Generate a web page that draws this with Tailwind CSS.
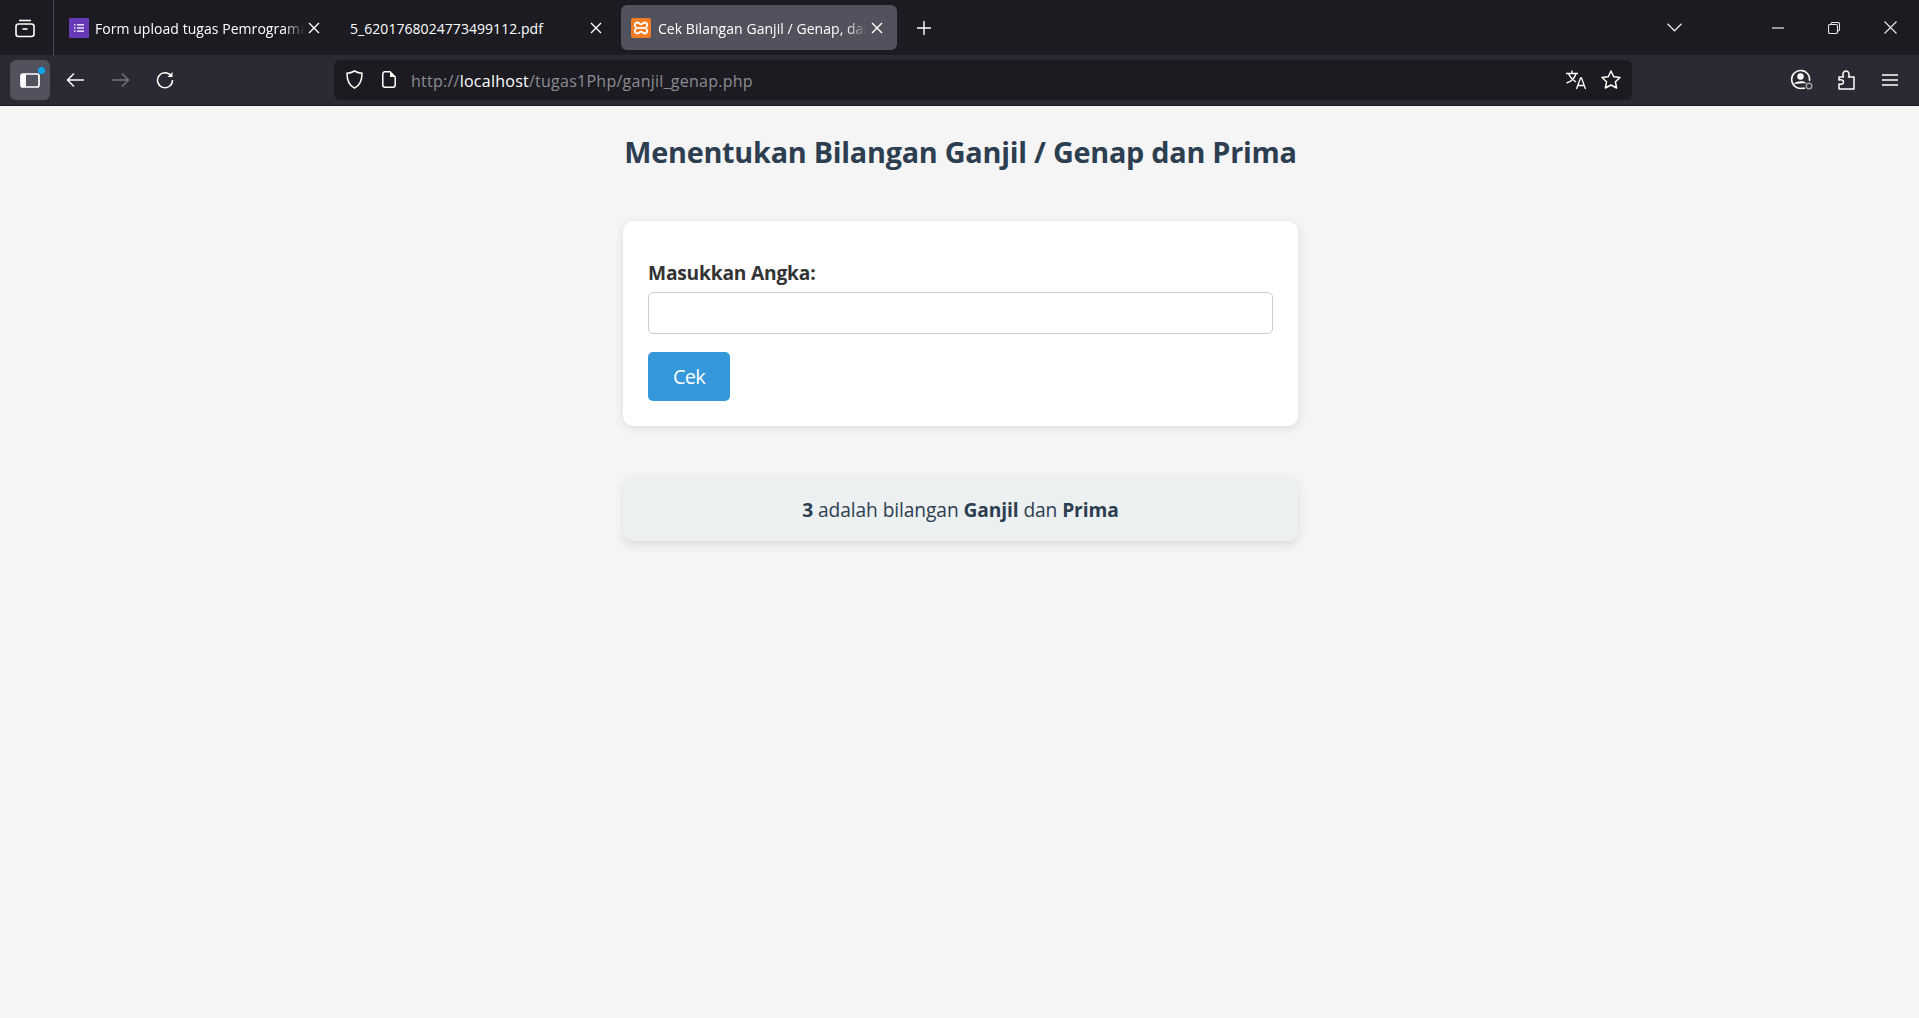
<!DOCTYPE html>
<html lang="en">
<head>
  <meta charset="UTF-8" />
  <meta name="viewport" content="width=device-width, initial-scale=1.0"/>
  <title>Cek Bilangan Ganjil / Genap, dan Prima</title>
  <script src="https://cdn.jsdelivr.net/npm/@tailwindcss/browser@4"></script>
</head>
<body class="h-screen overflow-hidden bg-[#f5f5f5] font-['Open_Sans','Noto_Sans',sans-serif]">

  <!-- Tab strip -->
  <div class="h-[55px] bg-[#1c1b22] flex items-center text-white text-[14px] tracking-[0.05px]">
    <div class="w-[54px] h-full border-r border-[#4a4a52] flex items-center pl-[15px]">
      <svg class="w-[20px] h-[20px]" viewBox="0 0 20 20" fill="none" stroke="white" stroke-width="1.6"><path d="M4 2.5h12"/><rect x="1" y="6" width="18" height="12.5" rx="2.5"/><path d="M7.5 11h5"/></svg>
    </div>
    <div class="w-[270px] ml-[15px] flex items-center">
      <svg class="w-[20px] h-[20px] shrink-0" viewBox="0 0 20 20"><rect width="20" height="20" fill="#673ab7"/><g fill="#fff" opacity=".85"><rect x="5" y="6" width="1.5" height="1.5"/><rect x="5" y="9.2" width="1.5" height="1.5"/><rect x="5" y="12.4" width="1.5" height="1.5"/><rect x="8" y="6" width="7" height="1.5"/><rect x="8" y="9.2" width="7" height="1.5"/><rect x="8" y="12.4" width="7" height="1.5"/></g></svg>
      <span class="ml-[6px] w-[210px] pt-[2px] overflow-hidden whitespace-nowrap [mask-image:linear-gradient(to_right,black_90%,transparent)]">Form upload tugas Pemrograman</span>
      <svg class="ml-[3px] w-[12px] h-[12px] shrink-0" viewBox="0 0 12 12" stroke="white" stroke-width="1.4"><path d="M1 1l10 10M11 1L1 11"/></svg>
    </div>
    <div class="w-[271px] ml-[11px] flex items-center">
      <span class="w-[236px] pt-[2px] overflow-hidden whitespace-nowrap">5_6201768024773499112.pdf</span>
      <svg class="ml-[4px] w-[12px] h-[12px] shrink-0" viewBox="0 0 12 12" stroke="white" stroke-width="1.4"><path d="M1 1l10 10M11 1L1 11"/></svg>
    </div>
    <div class="w-[276px] h-[45px] rounded-md bg-[#52525e] flex items-center pl-[10px]">
      <svg class="w-[20px] h-[20px] shrink-0" viewBox="0 0 20 20"><rect width="20" height="20" rx="2" fill="#f07c23"/><path d="M6.5 4.500c1.500 0 2.200 1.800 3.500 1.800s2-1.800 3.500-1.800c1.700 0 2.700 1.300 2.700 2.700 0 1.200-.8 2.300-2.200 2.800 1.400.5 2.200 1.600 2.200 2.800 0 1.400-1 2.700-2.700 2.700-1.500 0-2.200-1.800-3.500-1.800s-2 1.800-3.500 1.800c-1.700 0-2.700-1.300-2.700-2.700 0-1.200.8-2.300 2.200-2.800-1.400-.5-2.200-1.600-2.200-2.800 0-1.400 1-2.700 2.700-2.700z" fill="none" stroke="#fff" stroke-width="1.800"/><path d="M7 10h6" stroke="#fff" stroke-width="1.800"/></svg>
      <span class="ml-[7px] w-[209px] pt-[2px] overflow-hidden whitespace-nowrap [mask-image:linear-gradient(to_right,black_90%,transparent)]">Cek Bilangan Ganjil / Genap, dan Prima</span>
      <svg class="ml-[4px] w-[12px] h-[12px] shrink-0" viewBox="0 0 12 12" stroke="white" stroke-width="1.4"><path d="M1 1l10 10M11 1L1 11"/></svg>
    </div>
    <svg class="ml-[19px] w-[16px] h-[16px]" viewBox="0 0 16 16" stroke="white" stroke-width="1.4"><path d="M8 1v14M1 8h14"/></svg>
    <div class="flex-1"></div>
    <svg class="w-[15px] h-[9px] mr-[90px]" viewBox="0 0 15 9" fill="none" stroke="#e8e8e8" stroke-width="1.3"><path d="M.5 .8l7 7 7-7"/></svg>
    <svg class="w-[12px] h-[2px] mr-[44px]" viewBox="0 0 12 2" stroke="#e8e8e8" stroke-width="1.2"><path d="M0 1h12"/></svg>
    <svg class="w-[12px] h-[12px] mr-[44px]" viewBox="0 0 12 12" fill="none" stroke="#e8e8e8" stroke-width="1.1"><path d="M3 2.5V2a1.5 1.5 0 0 1 1.5-1.5H10A1.5 1.5 0 0 1 11.500 2v5.500A1.500 1.500 0 0 1 10 9h-.5"/><rect x=".5" y="2.500" width="9" height="9" rx="1.500"/></svg>
    <svg class="w-[13px] h-[13px] mr-[22px]" viewBox="0 0 13 13" stroke="#e8e8e8" stroke-width="1.2"><path d="M.5 .5l12 12M12.500 .5l-12 12"/></svg>
  </div>

  <!-- Toolbar -->
  <div class="h-[51px] bg-[#2b2a33] border-b border-[#1c1b22] flex items-center pb-[1px] text-[16px] tracking-[0.25px]">
    <div class="relative ml-[10px] w-[40px] h-[40px] rounded-md bg-[#52525e] flex items-center justify-center">
      <svg class="w-[20px] h-[16px]" viewBox="0 0 20 16" fill="none"><rect x="1" y="2" width="18" height="13" rx="2" stroke="white" stroke-width="1.700"/><rect x="1" y="2" width="5" height="13" fill="white"/></svg>
      <span class="absolute top-[7px] right-[5px] w-[7px] h-[7px] rounded-full bg-[#0ea5e9]"></span>
    </div>
    <svg class="ml-[16px] w-[18px] h-[16px]" viewBox="0 0 18 16" fill="none" stroke="white" stroke-width="1.500"><path d="M18 8H1.500M8 1.500 1.500 8 8 14.500"/></svg>
    <svg class="ml-[28px] w-[18px] h-[16px]" viewBox="0 0 18 16" fill="none" stroke="#74747b" stroke-width="1.500"><path d="M0 8h16.500M10 1.500 16.500 8 10 14.500"/></svg>
    <svg class="ml-[26px] w-[18px] h-[18px]" viewBox="0 0 18 18" fill="none" stroke="white" stroke-width="1.500"><path d="M15.500 5.500A7.500 7.500 0 1 0 16.500 9"/><path d="M16.500 1v5h-5" fill="white" stroke="none"/></svg>
    <div class="ml-[160px] w-[1298px] h-[40px] rounded-md bg-[#1c1b22] flex items-center pl-[12px]">
      <svg class="w-[17px] h-[19px]" viewBox="0 0 17 19" fill="none" stroke="white" stroke-width="1.500"><path d="M8.500 1C6 2.500 3.500 3.200 1 3.200c0 7 1.500 12 7.500 15 6-3 7.500-8 7.500-15C13.500 3.200 11 2.500 8.500 1z"/></svg>
      <svg class="ml-[19px] w-[14px] h-[17px]" viewBox="0 0 14 17" fill="none" stroke="white" stroke-width="1.500"><path d="M2.500 .8H8L13.200 6v8a2.200 2.200 0 0 1-2.200 2.200H3A2.200 2.200 0 0 1 .8 14V3A2.200 2.200 0 0 1 2.500 .8z"/><path d="M8 .8V6h5.200" fill="white" stroke="none"/></svg>
      <span class="ml-[15px] pt-[3px] text-[#8c8c92] whitespace-nowrap">http://<span class="text-white">localhost</span>/tugas1Php/ganjil_genap.php</span>
      <div class="flex-1"></div>
      <svg class="w-[21px] h-[20px]" viewBox="0 0 21 20" fill="none" stroke="white" stroke-width="1.300"><path d="M0 3.500h12M6 .5v3M10 3.500C9 8 5 12 .5 13M2.500 3.500C4 8 7 10 10 12"/><path d="M10.500 19l4-11h1l4 11M12 15.500h6"/></svg>
      <svg class="ml-[14px] mr-[11px] w-[20px] h-[19px]" viewBox="0 0 20 19" fill="none" stroke="white" stroke-width="1.500" stroke-linejoin="round"><path d="M10 1l2.700 5.700 6.300.8-4.600 4.300 1.200 6.200L10 15l-5.600 3 1.200-6.200L1 7.500l6.300-.8z"/></svg>
    </div>
    <svg class="ml-[158px] w-[24px] h-[21px]" viewBox="0 0 24 21" fill="none" stroke="white" stroke-width="1.500"><path d="M19.500 12A9 9 0 1 0 12 19.300h3"/><circle cx="10.500" cy="7.500" r="3.200" fill="white" stroke="none"/><path d="M3.800 15c2-3.500 11-3.500 12.500-.8H13" fill="white" stroke="none"/><circle cx="19" cy="17" r="2.800" stroke="#a0a0a5"/></svg>
    <svg class="ml-[24px] w-[17px] h-[20px]" viewBox="0 0 17 20" fill="none" stroke="white" stroke-width="1.500" stroke-linejoin="round"><path d="M1 7h4.500C4 4 5.500 1 8 1s4 3 2.500 6H16v12H1v-5c3 1 4.500-.5 4.500-2S4 9 1 10z"/></svg>
    <svg class="ml-[27px] w-[16px] h-[12px]" viewBox="0 0 16 12" stroke="white" stroke-width="1.400"><path d="M0 1h16M0 6h16M0 11h16"/></svg>
  </div>

  <!-- Page -->
  <main class="w-[675px] ml-[623px]">
    <h1 class="mt-[27px] h-[38px] text-center text-[#2c3e50] text-[28.8px] leading-[38px] font-bold tracking-[-0.25px] whitespace-nowrap">Menentukan Bilangan Ganjil / Genap dan Prima</h1>
    <form class="mt-[50px] h-[205px] rounded-[10px] bg-white shadow-[0_2px_10px_rgba(0,0,0,0.1)] px-[25px] pt-[39px]">
      <label class="block h-[32px] text-[19.2px] leading-[26px] font-bold text-[#333] tracking-[-0.2px]">Masukkan Angka:</label>
      <input type="text" class="block w-full h-[42px] rounded-[5px] border border-[#ccc] bg-white" />
      <button type="button" class="mt-[18px] block w-[82px] h-[49px] rounded-[5px] bg-[#3498db] text-white text-[20px] tracking-[-0.8px]">Cek</button>
    </form>
    <div class="mt-[50px] h-[65px] pt-[3px] rounded-[10px] bg-[#ecf0f1] shadow-[0_4px_10px_rgba(0,0,0,0.1)] flex items-center justify-center text-[19.2px] text-[#2c3e50] tracking-[-0.1px] whitespace-pre"><b class="font-bold">3</b> adalah bilangan <b class="font-bold">Ganjil</b> dan <b class="font-bold">Prima</b></div>
  </main>

</body>
</html>
